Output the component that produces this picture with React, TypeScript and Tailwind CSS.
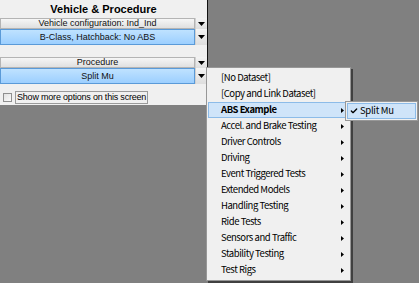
import { Check } from 'lucide-react';

const MENU_ITEMS = [
  { label: '[No Dataset]', sub: false },
  { label: '[Copy and Link Dataset]', sub: false },
  { label: 'ABS Example', sub: true, active: true },
  { label: 'Accel. and Brake Testing', sub: true },
  { label: 'Driver Controls', sub: true },
  { label: 'Driving', sub: true },
  { label: 'Event Triggered Tests', sub: true },
  { label: 'Extended Models', sub: true },
  { label: 'Handling Testing', sub: true },
  { label: 'Ride Tests', sub: true },
  { label: 'Sensors and Traffic', sub: true },
  { label: 'Stability Testing', sub: true },
  { label: 'Test Rigs', sub: true },
];

function DownArrow() {
  return (
    <svg width="7" height="4" viewBox="0 0 7 4">
      <path d="M0 0h7L3.5 4z" fill="#000" />
    </svg>
  );
}

function Combo({ label, selected }: { label: string; selected?: boolean }) {
  return (
    <div className={`flex ${selected ? 'h-[16px]' : 'h-[11px]'}`}>
      <div
        className={`flex-1 flex items-center justify-center border leading-none ${
          selected
            ? 'border-[#5a9ad8] bg-gradient-to-b from-[#bfe2ff] to-[#9ccfff]'
            : 'border-[#b4b4b4] bg-gradient-to-b from-[#f6f6f6] to-[#e0e0e0]'
        }`}
      >
        <span className="text-[9px] text-[#111]">{label}</span>
      </div>
      <div className="w-[12px] flex items-center justify-center bg-gradient-to-b from-[#f4f4f4] to-[#dedede] border-l border-[#d0d0d0]">
        <DownArrow />
      </div>
    </div>
  );
}

export default function App() {
  return (
    <div className="relative w-[419px] h-[283px] bg-[#808080] overflow-hidden font-['Liberation_Sans',Arial,sans-serif]">
      {/* Left options panel */}
      <div className="w-[208px] h-[105px] bg-[#f0f0f0] border-r border-[#111] flex flex-col">
        <div className="h-[18px] flex items-center justify-center text-[11px] font-bold text-black">
          Vehicle &amp; Procedure
        </div>
        <Combo label="Vehicle configuration: Ind_Ind" />
        <Combo label="B-Class, Hatchback: No ABS" selected />
        <div className="h-[12px]" />
        <Combo label="Procedure" />
        <Combo label="Split Mu" selected />
        <div className="flex items-center mt-[7px] pl-[3px] gap-[3px]">
          <div className="w-[9px] h-[9px] border border-[#8f8f8f] bg-gradient-to-br from-[#e2e2e2] to-[#fafafa]" />
          <div className="h-[13px] px-[1px] flex items-center border border-[#9a9a9a] text-[9px] tracking-[-0.2px] text-black leading-none">
            Show more options on this screen
          </div>
        </div>
      </div>

      {/* Dataset context menu */}
      <div className="absolute left-[206px] top-[67px] w-[145px] bg-[#f0f0f0] border border-[#979797] shadow-[2px_2px_0_#404040] py-[2px] pl-[1px] pr-[3px] font-['Noto_Sans_CJK_KR','Noto_Sans',sans-serif] text-[9.5px] tracking-[-0.45px] text-black">
        {MENU_ITEMS.map((item) => (
          <div
            key={item.label}
            className={`h-[16px] flex items-center pl-[12px] pr-[2px] border ${
              item.active ? 'bg-[#cfe4f9] border-[#8cbbe8] font-bold' : 'border-transparent'
            }`}
          >
            <span className="flex-1 leading-none">{item.label}</span>
            {item.sub && (
              <svg width="3" height="5" viewBox="0 0 3 5">
                <path d="M0 0l3 2.5L0 5z" fill="#000" />
              </svg>
            )}
          </div>
        ))}
      </div>

      {/* Submenu */}
      <div className="absolute left-[345px] top-[101px] w-[73px] h-[20px] bg-[#f0f0f0] border border-[#979797] p-[1px] font-['Noto_Sans_CJK_KR','Noto_Sans',sans-serif] text-[9.5px] tracking-[-0.3px] text-black">
        <div className="h-full flex items-center gap-[2px] pl-[2px] bg-[#cfe4f9] border border-[#8cbbe8]">
          <Check size={8} strokeWidth={4} />
          <span className="leading-none">Split Mu</span>
        </div>
      </div>
    </div>
  );
}
